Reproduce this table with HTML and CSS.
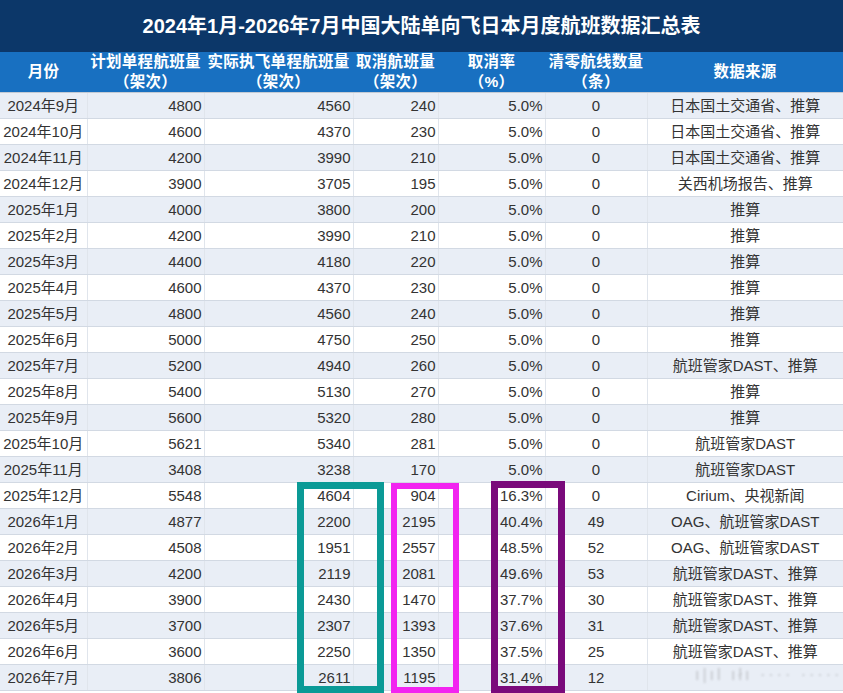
FILE: index.html
```html
<!DOCTYPE html>
<html lang="zh-CN">
<head>
<meta charset="utf-8">
<title>航班数据汇总表</title>
<link rel="stylesheet" href="styles.css">
</head>
<body>
<div class="page">
  <div class="title">2024年1月-2026年7月中国大陆单向飞日本月度航班数据汇总表</div>
  <table class="data">
    <colgroup>
      <col class="c1"><col class="c2"><col class="c3"><col class="c4"><col class="c5"><col class="c6"><col class="c7">
    </colgroup>
    <thead>
      <tr>
        <th>月份</th>
        <th>计划单程航班量<br>（架次）</th>
        <th>实际执飞单程航班量<br>（架次）</th>
        <th>取消航班量<br>（架次）</th>
        <th>取消率<br>（%）</th>
        <th>清零航线数量<br>（条）</th>
        <th>数据来源</th>
      </tr>
    </thead>
    <tbody>
      <tr><td class="m">2024年9月</td><td class="n">4800</td><td class="n">4560</td><td class="n">240</td><td class="n">5.0%</td><td class="z">0</td><td class="s">日本国土交通省、推算</td></tr>
      <tr><td class="m">2024年10月</td><td class="n">4600</td><td class="n">4370</td><td class="n">230</td><td class="n">5.0%</td><td class="z">0</td><td class="s">日本国土交通省、推算</td></tr>
      <tr><td class="m">2024年11月</td><td class="n">4200</td><td class="n">3990</td><td class="n">210</td><td class="n">5.0%</td><td class="z">0</td><td class="s">日本国土交通省、推算</td></tr>
      <tr><td class="m">2024年12月</td><td class="n">3900</td><td class="n">3705</td><td class="n">195</td><td class="n">5.0%</td><td class="z">0</td><td class="s">关西机场报告、推算</td></tr>
      <tr><td class="m">2025年1月</td><td class="n">4000</td><td class="n">3800</td><td class="n">200</td><td class="n">5.0%</td><td class="z">0</td><td class="s">推算</td></tr>
      <tr><td class="m">2025年2月</td><td class="n">4200</td><td class="n">3990</td><td class="n">210</td><td class="n">5.0%</td><td class="z">0</td><td class="s">推算</td></tr>
      <tr><td class="m">2025年3月</td><td class="n">4400</td><td class="n">4180</td><td class="n">220</td><td class="n">5.0%</td><td class="z">0</td><td class="s">推算</td></tr>
      <tr><td class="m">2025年4月</td><td class="n">4600</td><td class="n">4370</td><td class="n">230</td><td class="n">5.0%</td><td class="z">0</td><td class="s">推算</td></tr>
      <tr><td class="m">2025年5月</td><td class="n">4800</td><td class="n">4560</td><td class="n">240</td><td class="n">5.0%</td><td class="z">0</td><td class="s">推算</td></tr>
      <tr><td class="m">2025年6月</td><td class="n">5000</td><td class="n">4750</td><td class="n">250</td><td class="n">5.0%</td><td class="z">0</td><td class="s">推算</td></tr>
      <tr><td class="m">2025年7月</td><td class="n">5200</td><td class="n">4940</td><td class="n">260</td><td class="n">5.0%</td><td class="z">0</td><td class="s">航班管家DAST、推算</td></tr>
      <tr><td class="m">2025年8月</td><td class="n">5400</td><td class="n">5130</td><td class="n">270</td><td class="n">5.0%</td><td class="z">0</td><td class="s">推算</td></tr>
      <tr><td class="m">2025年9月</td><td class="n">5600</td><td class="n">5320</td><td class="n">280</td><td class="n">5.0%</td><td class="z">0</td><td class="s">推算</td></tr>
      <tr><td class="m">2025年10月</td><td class="n">5621</td><td class="n">5340</td><td class="n">281</td><td class="n">5.0%</td><td class="z">0</td><td class="s">航班管家DAST</td></tr>
      <tr><td class="m">2025年11月</td><td class="n">3408</td><td class="n">3238</td><td class="n">170</td><td class="n">5.0%</td><td class="z">0</td><td class="s">航班管家DAST</td></tr>
      <tr><td class="m">2025年12月</td><td class="n">5548</td><td class="n">4604</td><td class="n">904</td><td class="n">16.3%</td><td class="z">0</td><td class="s">Cirium、央视新闻</td></tr>
      <tr><td class="m">2026年1月</td><td class="n">4877</td><td class="n">2200</td><td class="n">2195</td><td class="n">40.4%</td><td class="z">49</td><td class="s">OAG、航班管家DAST</td></tr>
      <tr><td class="m">2026年2月</td><td class="n">4508</td><td class="n">1951</td><td class="n">2557</td><td class="n">48.5%</td><td class="z">52</td><td class="s">OAG、航班管家DAST</td></tr>
      <tr><td class="m">2026年3月</td><td class="n">4200</td><td class="n">2119</td><td class="n">2081</td><td class="n">49.6%</td><td class="z">53</td><td class="s">航班管家DAST、推算</td></tr>
      <tr><td class="m">2026年4月</td><td class="n">3900</td><td class="n">2430</td><td class="n">1470</td><td class="n">37.7%</td><td class="z">30</td><td class="s">航班管家DAST、推算</td></tr>
      <tr><td class="m">2026年5月</td><td class="n">3700</td><td class="n">2307</td><td class="n">1393</td><td class="n">37.6%</td><td class="z">31</td><td class="s">航班管家DAST、推算</td></tr>
      <tr><td class="m">2026年6月</td><td class="n">3600</td><td class="n">2250</td><td class="n">1350</td><td class="n">37.5%</td><td class="z">25</td><td class="s">航班管家DAST、推算</td></tr>
      <tr><td class="m">2026年7月</td><td class="n">3806</td><td class="n">2611</td><td class="n">1195</td><td class="n">31.4%</td><td class="z">12</td><td class="s"></td></tr>
    </tbody>
  </table>
  <div class="box box-teal"></div>
  <div class="box box-magenta"></div>
  <div class="box box-purple"></div>
  <div class="watermark">ı|ıl ıłı ···· ·····</div>
</div>
</body>
</html>
```

FILE: styles.css
```css
html, body {
  margin: 0;
  padding: 0;
  background: #ffffff;
}

.page {
  position: relative;
  width: 843px;
  height: 693px;
  overflow: hidden;
  font-family: "Liberation Sans", "Noto Sans CJK SC", sans-serif;
  color: #333333;
}

.title {
  height: 52px;
  line-height: 52px;
  background: #0c3769;
  color: #ffffff;
  font-size: 20px;
  font-weight: bold;
  text-align: center;
  font-family: "Liberation Sans", "Noto Sans CJK SC", sans-serif;
}

.data {
  width: 843px;
  border-collapse: collapse;
  table-layout: fixed;
  font-size: 15px;
}

.c1 { width: 87px; }
.c2 { width: 117px; }
.c3 { width: 149px; }
.c4 { width: 85px; }
.c5 { width: 107px; }
.c6 { width: 102px; }
.c7 { width: 196px; }

.data th {
  background: #1870c1;
  color: #ffffff;
  font-size: 15.5px;
  font-weight: bold;
  line-height: 20px;
  height: 40px;
  padding: 0;
  text-align: center;
  white-space: nowrap;
  letter-spacing: 0.3px;
  border-bottom: 1px solid #c3cad4;
}

.data td {
  height: 25px;
  padding: 0;
  border-bottom: 1px solid #d2d9e3;
  border-right: 1px solid #e0e5ec;
  white-space: nowrap;
  line-height: 25px;
}

.data td:last-child {
  border-right: none;
}

.data tbody tr:nth-child(odd) td {
  background: #e9eef6;
}

.data tbody tr:nth-child(even) td {
  background: #ffffff;
}

.m { text-align: center; }
.n { text-align: right; padding-right: 2px !important; }
.z { text-align: center; }
.s { text-align: center; }

.box {
  position: absolute;
  box-sizing: border-box;
}

.box-teal {
  left: 297px;
  top: 482px;
  width: 87px;
  height: 211px;
  border: 7px solid #0b9a96;
}

.box-magenta {
  left: 391px;
  top: 483px;
  width: 68px;
  height: 210px;
  border: 6px solid #f224f0;
}

.box-purple {
  left: 491px;
  top: 481px;
  width: 74px;
  height: 212px;
  border: 7px solid #7a0a7b;
}

.watermark {
  position: absolute;
  left: 695px;
  top: 665px;
  font-size: 16px;
  line-height: 20px;
  letter-spacing: 3px;
  color: rgba(120, 120, 120, 0.35);
  filter: blur(1px);
}
```
